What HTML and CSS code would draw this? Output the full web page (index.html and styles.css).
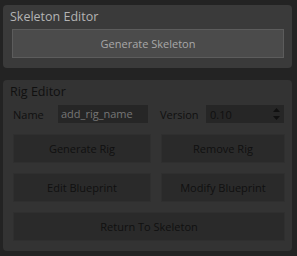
FILE: index.html
```html
<!DOCTYPE html>
<html lang="en">
<head>
  <meta charset="UTF-8" />
  <link rel="stylesheet" href="styles.css">
</head>
<body>
  <!-- Skeleton section -->
  <div class="group skeleton-group">
    <div class="group-title">Skeleton Editor</div>
    <button class="tool-button main-button">Generate Skeleton</button>
  </div>

  <!-- Rig section (disabled) -->
  <div class="group rig-group">
    <div class="group-title">Rig Editor</div>
    <div class="field-row">
      <span class="field-label">Name</span>
      <div class="text-field">add_rig_name</div>
      <span class="field-label version-label">Version</span>
      <div class="spin-field">
        <span class="spin-value">0.10</span>
        <span class="spin-arrows">
          <svg width="7" height="4" viewBox="0 0 7 4"><path d="M0 4 L3.5 0 L7 4 Z" fill="#101010"/></svg>
          <svg width="7" height="4" viewBox="0 0 7 4"><path d="M0 0 L3.5 4 L7 0 Z" fill="#101010"/></svg>
        </span>
      </div>
    </div>
    <div class="button-grid">
      <button class="tool-button dim-button">Generate Rig</button>
      <button class="tool-button dim-button">Remove Rig</button>
      <button class="tool-button dim-button">Edit Blueprint</button>
      <button class="tool-button dim-button">Modify Blueprint</button>
      <button class="tool-button dim-button wide">Return To Skeleton</button>
    </div>
  </div>
</body>
</html>
```
FILE: styles.css
```css
body {
  margin: 0;
  padding: 5px 5px 0 3px;
  background-color: #232323;
  font-family: 'Open Sans', sans-serif;
  font-size: 11px;
  display: flex;
  flex-direction: column;
  gap: 12px;
}

.group {
  border-radius: 4px;
  padding: 3px 8px 10px 9px;
  box-sizing: border-box;
}

.skeleton-group {
  background-color: #3a3a3a;
  height: 63px;
}

.rig-group {
  background-color: #333333;
  height: 171px;
}

.group-title {
  font-size: 12.5px;
  line-height: 17px;
  margin-left: -2px;
}

.skeleton-group .group-title {
  color: #b4b4b4;
}

.rig-group .group-title {
  color: #101010;
  margin-bottom: 5px;
}

.tool-button {
  font-family: 'Open Sans', sans-serif;
  font-size: 11px;
  height: 29px;
  border-radius: 0;
  cursor: pointer;
  box-sizing: border-box;
  width: 100%;
}

.main-button {
  margin-top: 4px;
  background-color: #4b4b4b;
  border: 1px solid #5c5c5c;
  color: #a8a8a8;
}

.field-row {
  display: flex;
  align-items: center;
  height: 18px;
  margin-left: 1px;
}

.field-label {
  color: #101010;
  width: 45px;
  font-size: 11px;
}

.version-label {
  margin-left: 12px;
  width: 46px;
}

.text-field {
  width: 90px;
  height: 18px;
  background-color: #262626;
  color: #767676;
  line-height: 18px;
  padding-left: 3px;
  box-sizing: border-box;
}

.spin-field {
  width: 78px;
  height: 18px;
  background-color: #262626;
  display: flex;
  align-items: center;
  justify-content: space-between;
  box-sizing: border-box;
  padding: 0 4px 0 4px;
}

.spin-value {
  color: #101010;
}

.spin-arrows {
  display: flex;
  flex-direction: column;
  gap: 4px;
}

.spin-arrows svg {
  display: block;
}

.button-grid {
  display: grid;
  grid-template-columns: 138px 124px;
  gap: 10px;
  margin-top: 11px;
  margin-left: 1px;
}

.dim-button {
  background-color: #2a2a2a;
  border: 1px solid #2f2f2f;
  color: #101010;
}

.wide {
  grid-column: 1 / 3;
}
```
